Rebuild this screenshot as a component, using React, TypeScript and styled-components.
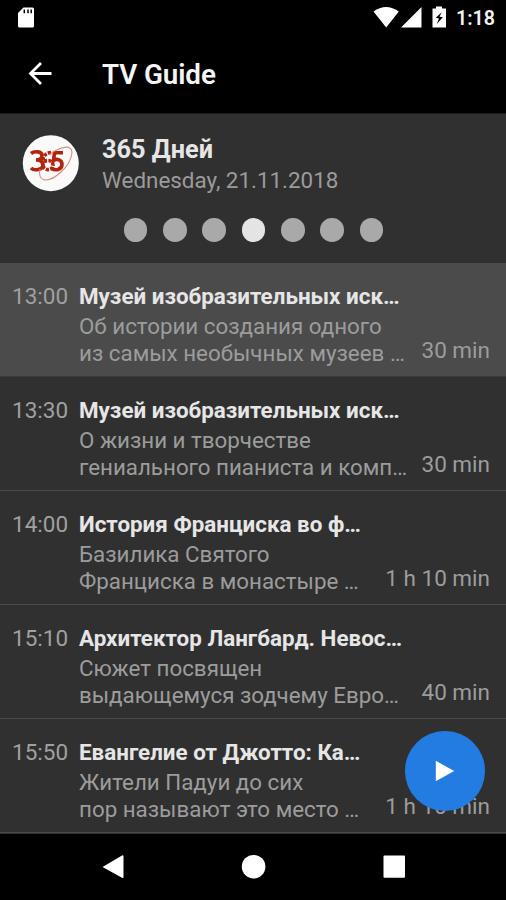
import React from "react";
import styled, { createGlobalStyle } from "styled-components";

const GlobalStyle = createGlobalStyle`
  * { box-sizing: border-box; }
  body { margin: 0; background: #000; font-family: Roboto, "Noto Sans", sans-serif; }
`;

const Screen = styled.div`
  position: relative;
  width: 506px;
  height: 900px;
  overflow: hidden;
  display: flex;
  flex-direction: column;
  background: #000;
  color: #e6e6e6;
`;

const StatusBar = styled.div`
  height: 36px;
  flex: none;
  display: flex;
  justify-content: space-between;
`;

const Icon = styled.svg`
  display: block;
  flex: none;
`;

const StatusRight = styled.div`
  display: flex;
`;

const Clock = styled.span`
  width: 54px;
  padding-left: 4px;
  font-size: 19.7px;
  font-weight: 600;
  line-height: 37px;
  color: #f2f2f2;
`;

const AppBar = styled.header`
  height: 77px;
  flex: none;
  display: flex;
  align-items: center;
`;

const BackButton = styled.button`
  width: 102px;
  height: 77px;
  padding: 0;
  border: 0;
  background: none;
  display: block;
`;

const Title = styled.h1`
  margin: 0;
  padding-top: 1px;
  font-size: 27.8px;
  line-height: 34px;
  font-weight: 600;
  letter-spacing: -0.1px;
  color: #f5f5f5;
`;

const ChannelHeader = styled.section`
  height: 150.4px;
  flex: none;
  background: #303030;
  border-top: 1px solid #1c1c1c;
`;

const ChannelRow = styled.div`
  display: flex;
  padding: 21px 0 0 22px;
  height: 96px;
`;

const ChannelText = styled.div`
  padding-left: 22px;
`;

const ChannelName = styled.div`
  font-size: 25.3px;
  line-height: 29px;
  font-weight: 700;
  white-space: nowrap;
`;

const ChannelDate = styled.div`
  font-size: 22.4px;
  line-height: 32px;
  color: #9b9b9b;
  white-space: nowrap;
`;

const Days = styled.div`
  display: flex;
  justify-content: center;
  gap: 15.8px;
  padding: 8px 0 0 1px;
`;

const Day = styled.span<{ $active: boolean }>`
  width: 23.6px;
  height: 23.6px;
  border-radius: 50%;
  background: ${(p) => (p.$active ? "#e4e4e4" : "#a9a9a9")};
`;

const Programmes = styled.main`
  flex: none;
  height: 570.6px;
  background: #303030;
`;

const Programme = styled.article<{ $current: boolean }>`
  height: 113.9px;
  display: flex;
  padding: 19px 16px 0 12px;
  background: ${(p) => (p.$current ? "#4b4b4b" : "#303030")};
  border-bottom: 1px solid ${(p) => (p.$current ? "#393939" : "#4b4b4b")};
`;

const Time = styled.time`
  width: 67px;
  flex: none;
  font-size: 22.5px;
  line-height: 28px;
  color: #a0a0a0;
`;

const Details = styled.div`
  flex: 1;
  min-width: 0;
  white-space: nowrap;
`;

const Name = styled.div`
  font-size: 22.4px;
  line-height: 28px;
  font-weight: 700;
`;

const Description = styled.div`
  margin-top: 2.8px;
  font-size: 22.35px;
  line-height: 26.8px;
  color: #9c9c9c;
`;

const Duration = styled.span`
  flex: none;
  padding-top: 54px;
  font-size: 22.5px;
  line-height: 28px;
  color: #9c9c9c;
`;

const PlayButton = styled.button`
  position: absolute;
  right: 21.5px;
  bottom: 89.5px;
  width: 79.5px;
  height: 79.5px;
  padding: 0;
  border: 0;
  border-radius: 50%;
  background: #237ce2;
`;

const NavBar = styled.nav`
  flex: 1;
  background: #000;
`;

const programmes = [
  { time: "13:00", name: "Музей изобразительных иск…", lines: ["Об истории создания одного", "из самых необычных музеев …"], duration: "30 min" },
  { time: "13:30", name: "Музей изобразительных иск…", lines: ["О жизни и творчестве", "гениального пианиста и комп…"], duration: "30 min" },
  { time: "14:00", name: "История Франциска во ф…", lines: ["Базилика Святого", "Франциска в монастыре …"], duration: "1 h 10 min" },
  { time: "15:10", name: "Архитектор Лангбард. Невос…", lines: ["Сюжет посвящен", "выдающемуся зодчему Евро…"], duration: "40 min" },
  { time: "15:50", name: "Евангелие от Джотто: Ка…", lines: ["Жители Падуи до сих", "пор называют это место …"], duration: "1 h 10 min" },
];

const ChannelLogo = () => (
  <Icon width="58" height="58" viewBox="0 0 58 58">
    <circle cx="28.8" cy="28.2" r="28" fill="#fafafa" />
    <g fill="none" stroke="#b3240f">
      <g strokeWidth="3.6">
        <path d="M9 18.5C12 16 20 16 20 20.5C20 23.5 17 25 14 25C18 25 21 26.5 21 30C21 35 12 36 9 33" />
        <path d="M29 17.5C23 18 20.5 22 20.5 28C20.5 37 31 36 31 30C31 25 24 24 21 28" strokeDasharray="3.2 1.3" />
        <path d="M41 17.8H32.5L31.5 25.5C35 23 40 25 40 29.2C40 35 33 36 29.5 33.3" />
      </g>
      <path d="M18 34C15 47 26 49 39 37C49 28 53 15 47 12.5C42 11 33 15 27 20" stroke="#d98a80" strokeWidth="1.1" />
    </g>
  </Icon>
);

export default function App() {
  return (
    <>
      <GlobalStyle />
      <Screen>
        <StatusBar>
          <Icon width="60" height="36" viewBox="0 0 60 36">
            <path d="M23.5 7.5H32.5Q34 7.5 34 9V26Q34 27.5 32.5 27.5H19.5Q18 27.5 18 26V13Z" fill="#fff" />
            <path d="M24.3 9.5V13.2M28 9.5V13.2M31.2 9.5V13.2" stroke="#000" strokeWidth="1.5" />
          </Icon>
          <StatusRight>
            <Icon width="83" height="36" viewBox="370 0 83 36">
              <g fill="#fff">
                <path d="M374.5 11.5Q387 2.5 399.8 11.5L387.2 27.5Z" />
                <path d="M422.5 7V27.5H402Z" />
                <path d="M433.5 8.5H437V6.5H443V8.5H447V27.5H433.5Z" />
              </g>
              <path d="M442.7 12.2L436.8 17.8L440 18.4L437.8 24L443.8 17.2L440.5 16.7Z" fill="#000" />
            </Icon>
            <Clock>1:18</Clock>
          </StatusRight>
        </StatusBar>
        <AppBar>
          <BackButton aria-label="Back">
            <Icon width="102" height="77" viewBox="0 36 102 77">
              <path d="M51.5 73.5H31M41 63L30.5 73.5L41 84" fill="none" stroke="#fff" strokeWidth="2.8" />
            </Icon>
          </BackButton>
          <Title>TV Guide</Title>
        </AppBar>
        <ChannelHeader>
          <ChannelRow>
            <ChannelLogo />
            <ChannelText>
              <ChannelName>365 Дней</ChannelName>
              <ChannelDate>Wednesday, 21.11.2018</ChannelDate>
            </ChannelText>
          </ChannelRow>
          <Days>
            {[0, 1, 2, 3, 4, 5, 6].map((d) => (
              <Day key={d} $active={d === 3} />
            ))}
          </Days>
        </ChannelHeader>
        <Programmes>
          {programmes.map((p, i) => (
            <Programme key={p.time} $current={i === 0}>
              <Time>{p.time}</Time>
              <Details>
                <Name>{p.name}</Name>
                <Description>
                  {p.lines[0]}
                  <br />
                  {p.lines[1]}
                </Description>
              </Details>
              <Duration>{p.duration}</Duration>
            </Programme>
          ))}
        </Programmes>
        <NavBar>
          <Icon width="506" height="66" viewBox="0 834 506 66">
            <g fill="#fff">
              <path d="M102.5 867L122 855.5Q123.5 854.8 123.5 856.5V877Q123.5 878.7 122 877.8Z" />
              <circle cx="253.6" cy="866.7" r="11.8" />
              <rect x="383.5" y="855.5" width="21.5" height="22.3" rx="1" />
            </g>
          </Icon>
        </NavBar>
        <PlayButton aria-label="Play">
          <Icon width="79.5" height="79.5" viewBox="0 0 80 80">
            <path d="M31 30V50.5L49.5 40.2Z" fill="#fff" />
          </Icon>
        </PlayButton>
      </Screen>
    </>
  );
}
